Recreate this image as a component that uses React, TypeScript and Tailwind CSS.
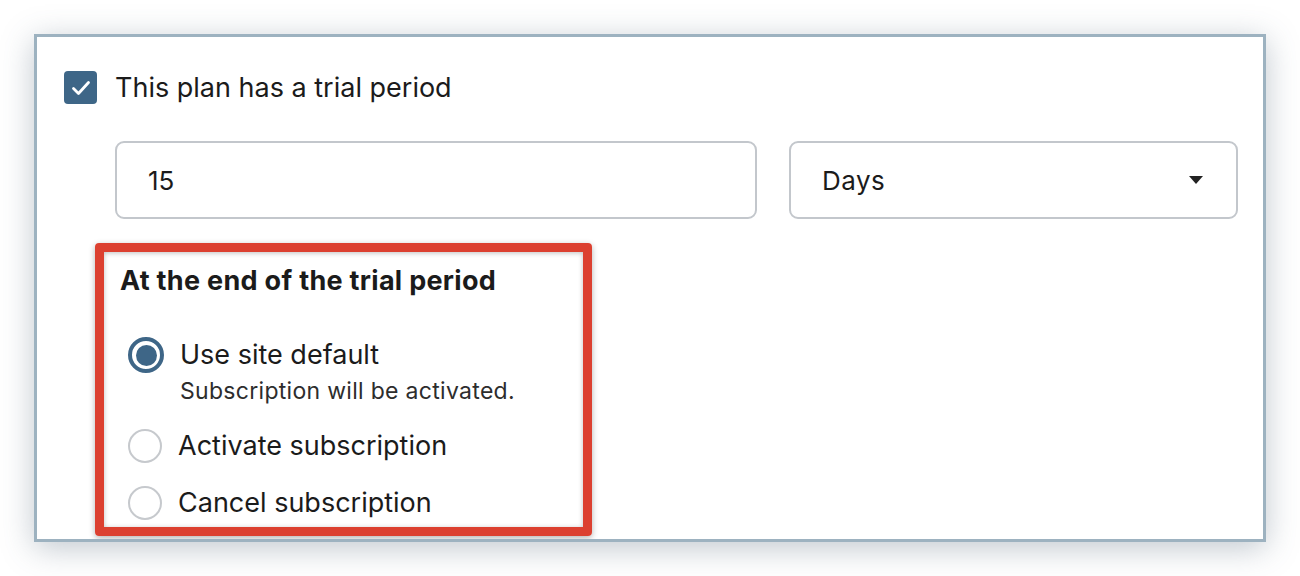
import { useState } from 'react';

type Option = { id: string; label: string; hint?: string };

const options: Option[] = [
  { id: 'default', label: 'Use site default', hint: 'Subscription will be activated.' },
  { id: 'activate', label: 'Activate subscription' },
  { id: 'cancel', label: 'Cancel subscription' },
];

function Radio({ checked }: { checked: boolean }) {
  if (checked) {
    return (
      <span className="flex h-[36px] w-[36px] shrink-0 items-center justify-center rounded-full border-[4px] border-[#3e6687] bg-white">
        <span className="h-[21px] w-[21px] rounded-full bg-[#3e6687]" />
      </span>
    );
  }
  return <span className="h-[34px] w-[34px] shrink-0 rounded-full border-[2px] border-[#c6c9cd] bg-white" />;
}

export default function App() {
  const [choice, setChoice] = useState('default');

  return (
    <div className="h-[576px] w-[1300px] bg-white pl-[34px] pt-[34px] font-['Inter','Helvetica',sans-serif] text-[#1b1b1b]">
      <div className="h-[508px] w-[1232px] overflow-hidden border-[3px] border-[#9db2c0] bg-white pl-[27px] pr-[25px] pt-[34px] shadow-[0_6px_30px_rgba(70,90,110,0.34)]">
        <label className="flex items-center gap-[18px]">
          <span className="flex h-[33px] w-[33px] items-center justify-center rounded-[4px] bg-[#3e6687]">
            <svg width="20" height="16" viewBox="0 0 20 16" fill="none">
              <path d="M2.5 8.5l5 5L17.5 2.5" stroke="white" strokeWidth="2.8" strokeLinecap="round" strokeLinejoin="round" />
            </svg>
          </span>
          <span className="text-[27px] leading-[32px]">This plan has a trial period</span>
        </label>

        <div className="ml-[51px] mt-[37px] flex gap-[32px]">
          <div className="flex h-[78px] w-[642px] items-center rounded-[9px] border-[2px] border-[#c3c7cc] px-[31px] text-[26px]">
            15
          </div>
          <div className="flex h-[78px] w-[449px] items-center justify-between rounded-[9px] border-[2px] border-[#c3c7cc] pl-[31px] pr-[33px] text-[26px]">
            <span className="tracking-[0.5px]">Days</span>
            <svg width="14" height="8" viewBox="0 0 14 8">
              <path d="M0 0h14L7 8z" fill="#222" />
            </svg>
          </div>
        </div>

        <div className="ml-[31px] mt-[24px] h-[293px] w-[497px] rounded-[4px] border-[9px] border-[#dc4030] pl-[16px] pt-[13px] shadow-[0_2px_6px_rgba(0,0,0,0.3),inset_0_1px_5px_rgba(0,0,0,0.25)]">
          <div className="text-[27px] font-bold leading-[32px] tracking-[0.3px]">At the end of the trial period</div>
          <div className="mt-[40px] flex flex-col">
            {options.map((o, i) => (
              <div
                key={o.id}
                onClick={() => setChoice(o.id)}
                className={i === 0 ? '' : i === 1 ? 'mt-[24px]' : 'mt-[21px]'}
              >
                <div className="flex h-[36px] items-center gap-[16px] pl-[8px]">
                  <Radio checked={o.id === choice} />
                  <span className="text-[27px] leading-[36px]">{o.label}</span>
                </div>
                {o.hint && (
                  <div className="mt-[5px] pl-[60px] text-[23px] leading-[26px] tracking-[0.3px] text-[#2d2d2d]">{o.hint}</div>
                )}
              </div>
            ))}
          </div>
        </div>
      </div>
    </div>
  );
}
